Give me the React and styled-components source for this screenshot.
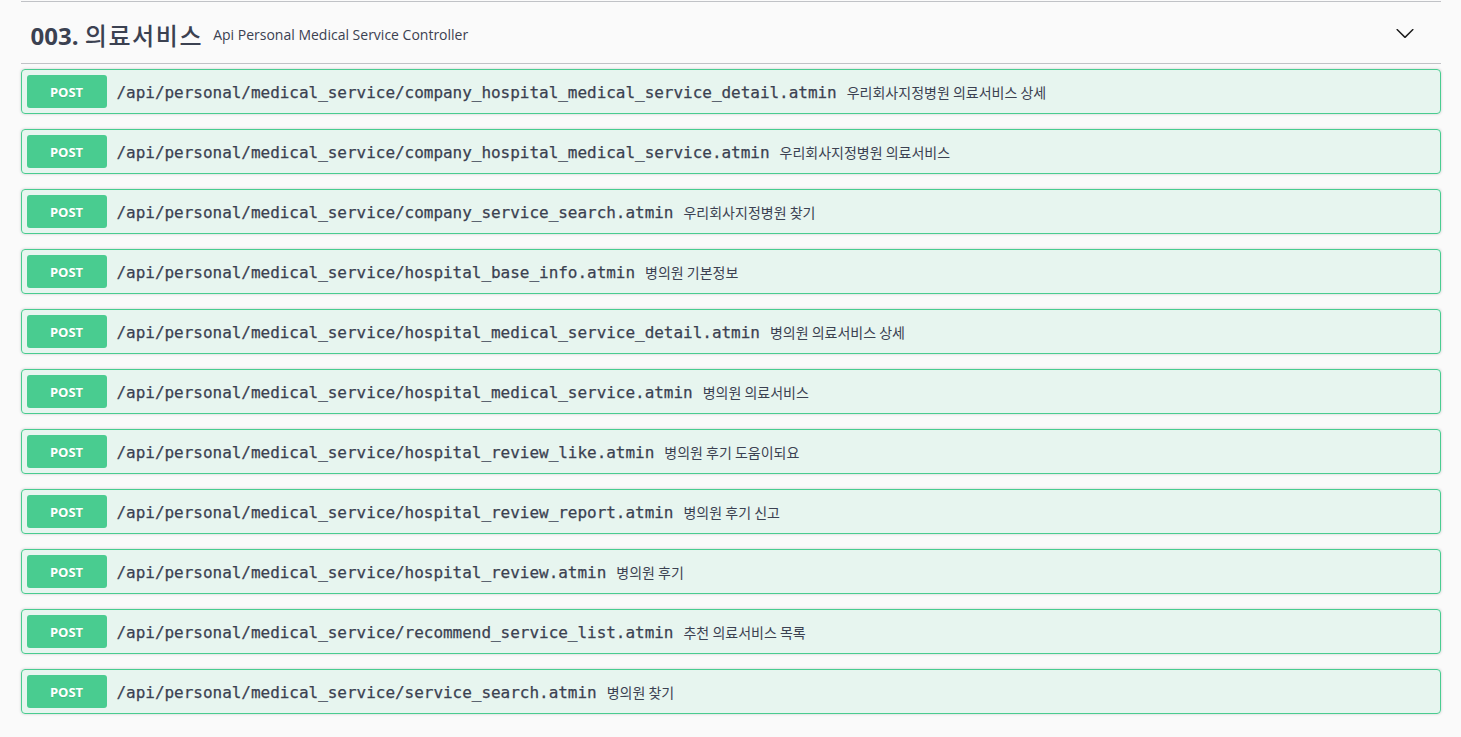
import styled, { createGlobalStyle } from "styled-components";

const GlobalStyle = createGlobalStyle`
  html, body {
    margin: 0;
    padding: 0;
    background: #fafafa;
  }
  body {
    font-family: "Open Sans", "Noto Sans CJK KR", sans-serif;
    color: #3b4151;
  }
`;

const Wrapper = styled.div`
  max-width: 1460px;
  margin: 0 auto;
  padding: 1px 20px 0;
  box-sizing: border-box;
`;

const Section = styled.div`
  border-top: 1px solid rgba(59, 65, 81, 0.3);
`;

const TagHeader = styled.h3`
  display: flex;
  align-items: center;
  margin: 0 0 5px;
  padding: 4px 20px 0 10px;
  box-sizing: content-box;
  height: 57px;
  border-bottom: 1px solid rgba(59, 65, 81, 0.3);
  font-family: "Open Sans", "Noto Sans CJK KR", sans-serif;
  color: #3b4151;
`;

const TagName = styled.span`
  font-size: 24px;
  font-weight: 700;
  white-space: pre;
`;

const TagKorean = styled.span`
  font-family: "Noto Sans CJK KR", sans-serif;
  font-weight: 500;
  letter-spacing: 1.6px;
`;

const TagDesc = styled.small`
  flex: 1;
  padding: 0 10px;
  font-size: 14px;
  font-weight: 400;
`;

const Toggle = styled.button`
  display: flex;
  align-items: center;
  padding: 0 6px;
  margin-top: -4px;
  border: none;
  background: none;
  cursor: pointer;
`;

const Operation = styled.div`
  display: flex;
  align-items: center;
  margin: 0 0 15px;
  padding: 5px;
  border: 1px solid #49cc90;
  border-radius: 4px;
  background: rgba(73, 204, 144, 0.1);
  box-shadow: 0 0 3px rgba(0, 0, 0, 0.19);
`;

const Method = styled.span`
  display: flex;
  align-items: center;
  justify-content: center;
  min-width: 80px;
  height: 33px;
  border-radius: 3px;
  background: #49cc90;
  color: #fff;
  font-family: "Open Sans", sans-serif;
  font-size: 13px;
  font-weight: 700;
  text-shadow: 0 1px 0 rgba(0, 0, 0, 0.1);
`;

const Path = styled.span`
  padding: 1px 10px 0;
  font-family: "DejaVu Sans Mono", "Liberation Mono", monospace;
  font-size: 16px;
  font-weight: 400;
  letter-spacing: -0.03px;
  color: #3b4151;
  -webkit-text-stroke: 0.25px #3b4151;
`;

const Summary = styled.span`
  font-family: "Noto Sans CJK KR", "Open Sans", sans-serif;
  font-size: 14px;
  color: #3b4151;
`;

const operations = [
  ["company_hospital_medical_service_detail.atmin", "우리회사지정병원 의료서비스 상세"],
  ["company_hospital_medical_service.atmin", "우리회사지정병원 의료서비스"],
  ["company_service_search.atmin", "우리회사지정병원 찾기"],
  ["hospital_base_info.atmin", "병의원 기본정보"],
  ["hospital_medical_service_detail.atmin", "병의원 의료서비스 상세"],
  ["hospital_medical_service.atmin", "병의원 의료서비스"],
  ["hospital_review_like.atmin", "병의원 후기 도움이되요"],
  ["hospital_review_report.atmin", "병의원 후기 신고"],
  ["hospital_review.atmin", "병의원 후기"],
  ["recommend_service_list.atmin", "추천 의료서비스 목록"],
  ["service_search.atmin", "병의원 찾기"],
];

function Arrow() {
  return (
    <svg width="20" height="20" viewBox="0 0 20 20" fill="#1a1a1a">
      <path d="M17.418 6.109c.272-.268.709-.268.979 0s.271.701 0 .969l-7.908 7.83c-.27.268-.707.268-.979 0l-7.908-7.83c-.27-.268-.27-.701 0-.969.271-.268.709-.268.979 0L10 13.25l7.418-7.141z" />
    </svg>
  );
}

export default function App() {
  return (
    <>
      <GlobalStyle />
      <Wrapper>
        <Section>
          <TagHeader>
            <TagName>
              003. <TagKorean>의료서비스</TagKorean>
            </TagName>
            <TagDesc>Api Personal Medical Service Controller</TagDesc>
            <Toggle aria-label="collapse">
              <Arrow />
            </Toggle>
          </TagHeader>
          {operations.map(([path, summary]) => (
            <Operation key={path}>
              <Method>POST</Method>
              <Path>/api/personal/medical_service/{path}</Path>
              <Summary>{summary}</Summary>
            </Operation>
          ))}
        </Section>
      </Wrapper>
    </>
  );
}
